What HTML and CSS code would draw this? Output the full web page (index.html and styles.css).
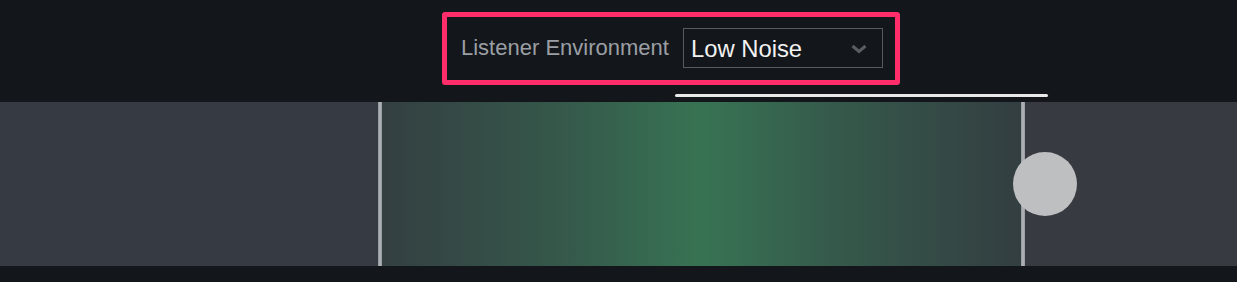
FILE: index.html
```html
<!DOCTYPE html>
<html lang="en">
<head>
<meta charset="utf-8">
<title>Listener Environment</title>
<link rel="stylesheet" href="styles.css">
</head>
<body>
<header class="top">
  <div class="panel">
    <span class="label">Listener Environment</span>
    <div class="select">
      <span class="select-value">Low Noise</span>
      <svg class="chevron" width="18" height="10" viewBox="0 0 18 10" aria-hidden="true">
        <polyline points="2.5,2 9,7.5 15.5,2" fill="none" stroke="#595d63" stroke-width="3" stroke-linejoin="miter"/>
      </svg>
    </div>
  </div>
  <div class="progress"></div>
</header>
<section class="band">
  <div class="band-side band-left"></div>
  <div class="marker"></div>
  <div class="range"></div>
  <div class="marker marker-right">
    <div class="knob"></div>
  </div>
  <div class="band-side band-right"></div>
</section>
</body>
</html>
```

FILE: styles.css
```css
html, body {
  margin: 0;
  padding: 0;
}
body {
  background: #13161b;
  width: 1237px;
  height: 282px;
  overflow: hidden;
  font-family: "Liberation Sans", Arial, sans-serif;
}
.top {
  height: 102px;
  padding-left: 442px;
  padding-top: 12px;
  box-sizing: border-box;
  display: flex;
  flex-direction: column;
  align-items: flex-start;
}
.panel {
  display: flex;
  align-items: center;
  border: 5px solid #ff2d6a;
  border-radius: 3px;
  padding: 11px 12px 12px 14px;
  width: 458px;
  box-sizing: border-box;
}
.label {
  color: #9b9fa4;
  font-size: 22px;
  width: 222px;
  white-space: nowrap;
}
.select {
  width: 200px;
  height: 40px;
  box-sizing: border-box;
  border: 1px solid #565a60;
  display: flex;
  align-items: center;
  justify-content: space-between;
  padding: 0 14px 0 7px;
}
.select-value {
  color: #f2f2f2;
  font-size: 23.8px;
  margin-top: 1px;
}
.chevron {
  display: block;
  margin-top: 1px;
}
.progress {
  margin-top: 9px;
  margin-left: 233px;
  width: 373px;
  height: 3px;
  border-radius: 2px;
  background: #e9e9e9;
}
.band {
  display: flex;
  height: 164px;
}
.band-side {
  background: #363a42;
}
.band-left {
  width: 378px;
}
.band-right {
  flex: 1;
  background: #373a41;
}
.marker {
  width: 4px;
  background: linear-gradient(to right, #8a8f95 0%, #aeb2b6 30%, #a8acb0 75%, #90959a 100%);
}
.marker-right {
  position: relative;
}
.range {
  width: 639px;
  background: linear-gradient(to right, #343f42 0%, #35574a 27%, #377353 50%, #35574a 73%, #333e41 100%);
}
.knob {
  position: absolute;
  left: -8px;
  top: 50px;
  width: 64px;
  height: 64px;
  border-radius: 50%;
  background: #bebfc1;
}
```
